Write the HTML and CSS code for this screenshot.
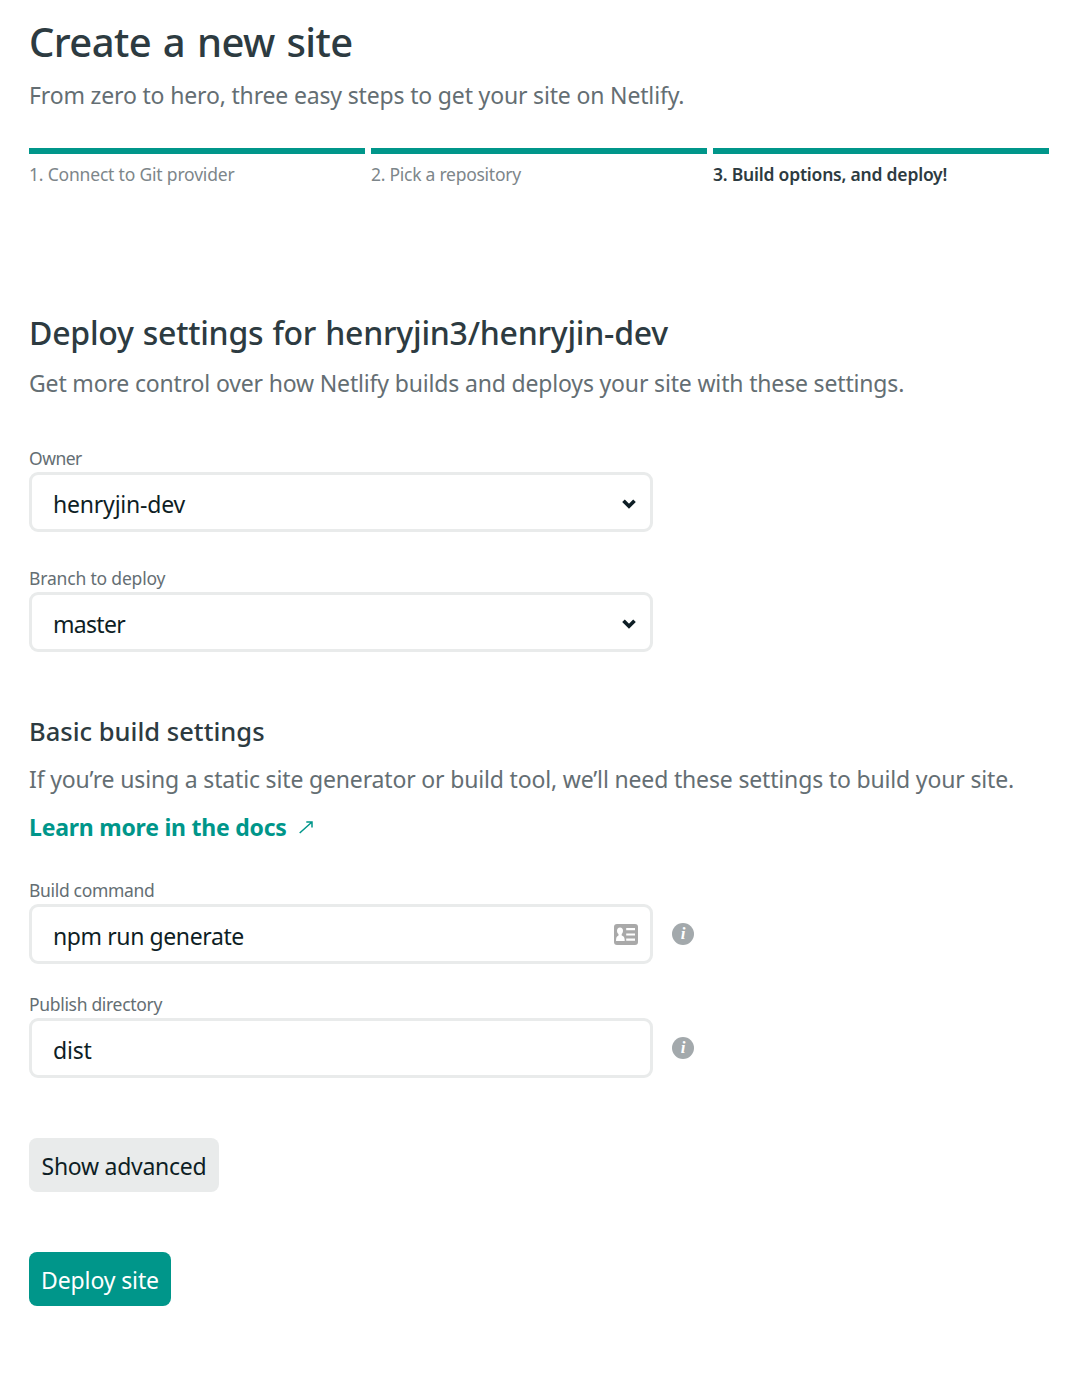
FILE: index.html
```html
<!DOCTYPE html>
<html lang="en">
<head>
<meta charset="utf-8">
<title>Create a new site</title>
<link rel="stylesheet" href="styles.css">
</head>
<body>
<main class="page">
  <header>
    <h1 class="title">Create a new site</h1>
    <p class="lead">From zero to hero, three easy steps to get your site on Netlify.</p>
  </header>

  <ol class="steps">
    <li class="step">1. Connect to Git provider</li>
    <li class="step step-repo">2. Pick a repository</li>
    <li class="step step-current">3. Build options, and deploy!</li>
  </ol>

  <section class="settings">
    <h2 class="heading">Deploy settings for henryjin3/henryjin-dev</h2>
    <p class="lead">Get more control over how Netlify builds and deploys your site with these settings.</p>

    <div class="fields">
      <div class="field">
        <span class="label label-owner">Owner</span>
        <div class="control">
          <span class="value">henryjin-dev</span>
          <svg class="chevron" width="14" height="10" viewBox="0 0 14 10"><path d="M1.500 1.700 7 7.200l5.500-5.500" fill="none" stroke="#0e1e25" stroke-width="3.700"/></svg>
        </div>
      </div>
      <div class="field">
        <span class="label">Branch to deploy</span>
        <div class="control">
          <span class="value value-branch">master</span>
          <svg class="chevron" width="14" height="10" viewBox="0 0 14 10"><path d="M1.500 1.700 7 7.200l5.500-5.500" fill="none" stroke="#0e1e25" stroke-width="3.700"/></svg>
        </div>
      </div>
    </div>
  </section>

  <section class="build">
    <h3 class="subheading">Basic build settings</h3>
    <p class="lead build-text">If you’re using a static site generator or build tool, we’ll need these settings to build your site.</p>
    <a class="docs">Learn more in the docs
      <svg class="arrow" width="14" height="13" viewBox="0 0 14 13"><path d="M.7 12 12.700 1.200M7.300 1h5.700v5.500" fill="none" stroke="#00968a" stroke-width="1.500"/></svg>
    </a>

    <div class="fields build-fields">
      <div class="field">
        <span class="label label-tight">Build command</span>
        <div class="row">
          <div class="control">
            <span class="value value-command">npm run generate</span>
            <svg width="24" height="21" viewBox="0 0 24 21">
              <rect width="24" height="21" rx="3" fill="#a9a9a9"/>
              <path d="M6 3.500c2 0 3 1.300 3 3.200 0 1.500-.6 2.600-1.300 3.300v1.500c2 .7 3 1.800 3 5.500H2c0-3.700.8-4.800 2.500-5.500V10C3.600 9.300 3 8.200 3 6.700c0-1.900 1-3.200 3-3.200z" fill="#fff"/>
              <path d="M12.200 5.200H21M12.200 10.500H21M12.200 15.700H21" stroke="#fff" stroke-width="2.200"/>
            </svg>
          </div>
          <span class="info">i</span>
        </div>
      </div>
      <div class="field">
        <span class="label label-tight">Publish directory</span>
        <div class="row">
          <div class="control"><span class="value">dist</span></div>
          <span class="info">i</span>
        </div>
      </div>
    </div>
  </section>

  <div class="actions">
    <button class="button button-advanced" type="button">Show advanced</button>
    <button class="button button-deploy" type="button">Deploy site</button>
  </div>
</main>
</body>
</html>
```
FILE: styles.css
```css
* { box-sizing: border-box; }
body {
  margin: 0;
  background: #fff;
  color: #0e1e25;
  font-family: "Noto Sans", sans-serif;
}
h1, h2, h3, p, ol { margin: 0; padding: 0; font-weight: 550; }
.page { padding: 18px 23px 84px 29px; }

.title { color: #2d3b41; font-size: 40px; line-height: 48px; letter-spacing: -.6px; word-spacing: 2px; }
.lead {
  margin-top: 11px;
  color: #646e73;
  font-size: 23px;
  font-weight: 400;
  line-height: 36px;
  letter-spacing: -.165px;
  white-space: nowrap;
}

.steps {
  display: grid;
  grid-template-columns: repeat(3, 1fr);
  gap: 6px;
  margin-top: 35px;
  list-style: none;
}
.step {
  padding-top: 8px;
  border-top: 6px solid #00968a;
  color: #7d868a;
  font-size: 17.5px;
  font-weight: 400;
  line-height: 24px;
  letter-spacing: -.19px;
}
.step-repo { letter-spacing: -.26px; }
.step-current { color: #2d3b41; font-weight: 600; letter-spacing: -.21px; }

.settings { margin-top: 127px; }
.heading { color: #2d3b41; font-size: 32px; line-height: 40px; letter-spacing: -.24px; word-spacing: 1px; }
.settings .lead { margin-top: 12px; }

.fields { display: flex; flex-direction: column; gap: 34px; margin-top: 45px; }
.field { display: flex; flex-direction: column; gap: 2px; }
.label { color: #646e73; font-size: 17.5px; line-height: 24px; letter-spacing: -.18px; }
.label-owner { letter-spacing: -.5px; }
.label-tight { letter-spacing: -.32px; }
.row { display: flex; align-items: center; gap: 19px; }
.control {
  display: flex;
  align-items: center;
  justify-content: space-between;
  width: 624px;
  height: 60px;
  padding: 0 12px 0 21px;
  border: 3px solid #e9ebeb;
  border-radius: 9px;
}
.value { padding-top: 3px; font-size: 23px; line-height: 36px; letter-spacing: -.2px; }
.value-branch { letter-spacing: -.7px; }
.value-command { letter-spacing: -.4px; }
.chevron { margin: 4px 2px 0 0; }
.info {
  width: 22px;
  height: 22px;
  border-radius: 50%;
  background: #a3a9ac;
  color: #fff;
  font: italic bold 17px/21px "Liberation Serif", serif;
  text-align: center;
}

.build { margin-top: 61px; }
.subheading { color: #2d3b41; font-size: 25.5px; line-height: 36px; letter-spacing: .01px; }
.build-text { margin: 12px 0; }
.docs {
  display: flex;
  align-items: center;
  gap: 12px;
  color: #00968a;
  font-size: 23px;
  font-weight: 700;
  line-height: 36px;
  letter-spacing: -.23px;
}
.arrow { margin-top: 1px; }
.build-fields { gap: 28px; margin-top: 33px; }

.actions { display: flex; flex-direction: column; align-items: flex-start; gap: 60px; margin-top: 60px; }
.button {
  height: 54px;
  padding: 1px 0 0;
  border: 0;
  border-radius: 8px;
  font: 400 23px/36px "Noto Sans", sans-serif;
}
.button-advanced { width: 190px; background: #e9ebeb; color: #0e1e25; letter-spacing: -.27px; }
.button-deploy { width: 142px; background: #00968a; color: #fff; letter-spacing: -.13px; }
```
